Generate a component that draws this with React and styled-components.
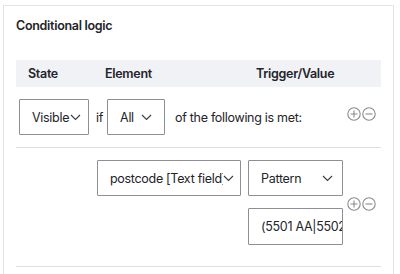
import React from 'react';
import styled, { createGlobalStyle } from 'styled-components';

const GlobalStyle = createGlobalStyle`
  body {
    margin: 0;
    background: #ffffff;
    font-family: "Inter", "Noto Sans", sans-serif;
    color: #232429;
  }
`;

const Card = styled.div`
  margin: 5px 0 0 3px;
  width: 365px;
  min-height: 300px;
  padding: 12px 12px 0;
  border: 1px solid #e4e4e7;
  border-bottom: none;
`;

const Heading = styled.h3`
  margin: 0 0 26px;
  font-size: 12.5px;
  line-height: 16px;
  font-weight: 600;
  letter-spacing: -0.3px;
`;

const Columns = `77px 151px 102px 35px`;

const HeaderRow = styled.div`
  display: grid;
  grid-template-columns: ${Columns};
  height: 27px;
  align-items: center;
  background: #f1f2f6;
`;

const HeaderCell = styled.div`
  padding: 0 12px;
  font-size: 12.5px;
  font-weight: 600;
  letter-spacing: -0.3px;
  text-align: ${({ $center }) => ($center ? 'center' : 'left')};
`;

const ConditionRow = styled.div`
  display: flex;
  align-items: center;
  padding: 12px 0 12px 3px;
  border-bottom: 1px solid #dedfe3;
`;

const RuleRow = styled.div`
  display: grid;
  grid-template-columns: ${Columns};
  align-items: start;
  padding: 12px 0 21px;
  border-bottom: 1px solid #dedfe3;
`;

const Cell = styled.div`
  display: flex;
  flex-direction: column;
  gap: 12px;
  padding: 0 3px 0 4px;
`;

const SelectBox = styled.div`
  display: flex;
  align-items: center;
  box-sizing: border-box;
  width: ${({ $width }) => $width}px;
  height: 36px;
  padding: 0 ${({ $padRight }) => $padRight ?? 10}px 0 12px;
  border: 1px solid #8e8e96;
  border-radius: 1px;
  background: #ffffff;
  font-size: 12.5px;
  letter-spacing: -0.3px;
`;

const SelectText = styled.span`
  flex: 1;
  overflow: hidden;
  white-space: nowrap;
`;

const InputBox = styled.div`
  box-sizing: border-box;
  width: 95px;
  height: 37px;
  padding: 0 3px 0 12px;
  border: 1px solid #8e8e96;
  border-radius: 1px;
  font-size: 12.5px;
  line-height: 35px;
  letter-spacing: -0.3px;
  white-space: nowrap;
  overflow: hidden;
`;

const Label = styled.span`
  font-size: 12.5px;
  letter-spacing: -0.3px;
  margin: ${({ $margin }) => $margin};
`;

const Ops = styled.div`
  display: flex;
  gap: 1px;
  margin-left: auto;
  width: 34px;
  padding-left: 1px;
  align-self: ${({ $raise }) => ($raise ? 'flex-start' : 'center')};
  margin-top: ${({ $raise }) => ($raise ? '8px' : '3px')};
`;

const Chevron = () => (
  <svg width="11" height="7" viewBox="0 0 11 7" fill="none">
    <path d="M1 1l4.5 4.5L10 1" stroke="#3a3b40" strokeWidth="1.1" />
  </svg>
);

const PlusCircle = () => (
  <svg width="14" height="14" viewBox="0 0 14 14" fill="none">
    <circle cx="7" cy="7" r="6.2" stroke="#8a8a8a" strokeWidth="1.1" />
    <path d="M7 3.5v7M3.5 7h7" stroke="#8a8a8a" strokeWidth="1.1" />
  </svg>
);

const MinusCircle = () => (
  <svg width="14" height="14" viewBox="0 0 14 14" fill="none">
    <circle cx="7" cy="7" r="6.2" stroke="#8a8a8a" strokeWidth="1.1" />
    <path d="M3.5 7h7" stroke="#8a8a8a" strokeWidth="1.1" />
  </svg>
);

const Select = ({ width, padRight, children }) => (
  <SelectBox $width={width} $padRight={padRight}>
    <SelectText>{children}</SelectText>
    <Chevron />
  </SelectBox>
);

const ConditionalLogic = () => (
  <Card>
    <Heading>Conditional logic</Heading>
    <HeaderRow>
      <HeaderCell>State</HeaderCell>
      <HeaderCell>Element</HeaderCell>
      <HeaderCell $center>Trigger/Value</HeaderCell>
      <HeaderCell />
    </HeaderRow>
    <ConditionRow>
      <Select width={70} padRight={7}>Visible</Select>
      <Label $margin="0 4px 0 7px">if</Label>
      <Select width={58} padRight={12}>All</Select>
      <Label $margin="0 0 0 10px">of the following is met:</Label>
      <Ops $raise>
        <PlusCircle />
        <MinusCircle />
      </Ops>
    </ConditionRow>
    <RuleRow>
      <Cell />
      <Cell>
        <Select width={144} padRight={6}>postcode [Text field]</Select>
      </Cell>
      <Cell>
        <Select width={95} padRight={9}>Pattern</Select>
        <InputBox>(5501 AA|5502 BB)</InputBox>
      </Cell>
      <Ops>
        <PlusCircle />
        <MinusCircle />
      </Ops>
    </RuleRow>
  </Card>
);

const App = () => (
  <>
    <GlobalStyle />
    <ConditionalLogic />
  </>
);

export default App;
